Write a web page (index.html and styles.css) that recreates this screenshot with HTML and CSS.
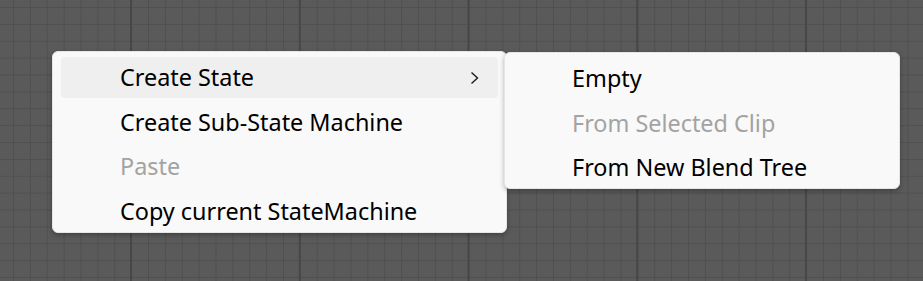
FILE: index.html
```html
<!DOCTYPE html>
<html lang="en">
<head>
    <meta charset="UTF-8">
    <title>Animator context menu</title>
    <link rel="stylesheet" href="styles.css">
</head>
<body>

    <div class="canvas">

        <!-- Main context menu -->
        <div class="menu menu-main">
            <div class="item active">
                <span>Create State</span>
                <svg class="chevron" width="9" height="14" viewBox="0 0 9 14">
                    <polyline points="1.5,1.5 7.5,7 1.5,12.5" fill="none" stroke="#1e1e1e" stroke-width="1.4"/>
                </svg>
            </div>
            <div class="item">Create Sub-State Machine</div>
            <div class="item disabled">Paste</div>
            <div class="item">Copy current StateMachine</div>
        </div>

        <!-- Submenu for Create State -->
        <div class="menu menu-sub">
            <div class="item">Empty</div>
            <div class="item disabled">From Selected Clip</div>
            <div class="item">From New Blend Tree</div>
        </div>

    </div>

</body>
</html>
```

FILE: styles.css
```css
html, body {
    margin: 0;
    padding: 0;
}
body {
    font-family: "Noto Sans", "Open Sans", sans-serif;
    width: 923px;
    height: 281px;
    overflow: hidden;
}
/* Grid background of the graph view */
.canvas {
    position: relative;
    width: 923px;
    height: 281px;
    background-color: #5a5a5a;
    background-image:
        linear-gradient(to right, #474747 0, #474747 2px, transparent 2px),
        linear-gradient(to right, #505050 0, #505050 1px, transparent 1px),
        linear-gradient(to bottom, #505050 0, #505050 1px, transparent 1px);
    background-size:
        168.75px 100%,
        16.875px 100%,
        100% 16.875px;
    background-position:
        130px 0,
        13px 0,
        0 7px;
}
/* Menus */
.menu {
    position: absolute;
    box-sizing: border-box;
    display: flex;
    flex-direction: column;
    gap: 3.5px;
    padding: 5px 8px 0;
    background: #f9f9f9;
    border: 1px solid #e6e6e6;
    border-radius: 6px;
    box-shadow: 0 2px 5px rgba(0, 0, 0, 0.28);
}
.menu-main {
    left: 52px;
    top: 51px;
    width: 455px;
}
.menu-sub {
    left: 504px;
    top: 52px;
    width: 396px;
}
.item {
    display: flex;
    align-items: center;
    justify-content: space-between;
    height: 41px;
    padding: 0 19px 0 59px;
    font-size: 23.4px;
    line-height: 41px;
    color: #000;
    border-radius: 4px;
    white-space: nowrap;
}
.item.active {
    background: #efefef;
}
.item.disabled {
    color: #a3a3a3;
}
.chevron {
    display: block;
}
```
